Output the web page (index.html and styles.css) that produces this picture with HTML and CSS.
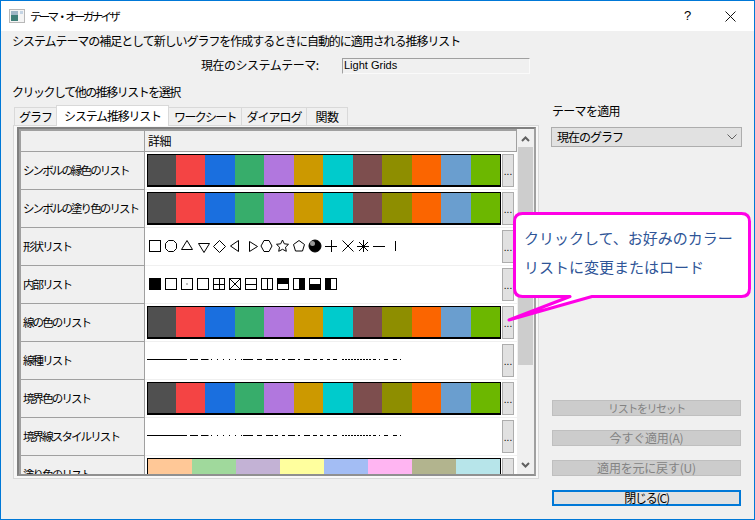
FILE: index.html
```html
<!DOCTYPE html>
<html lang="ja">
<head>
    <meta charset="UTF-8">
    <title>テーマ・オーガナイザ</title>
    <link rel="stylesheet" href="styles.css">
</head>
<body>
    <div class="window">
        <div class="title-bar">
            <svg class="app-icon" width="16" height="16" viewBox="0 0 16 16">
                <rect x="0.5" y="1.5" width="15" height="13" fill="#f4f4f4" stroke="#b8b8b8"/>
                <rect x="2" y="3" width="7" height="10" fill="#3f7f78"/>
                <rect x="2" y="3" width="7" height="4" fill="#9fb6c6"/>
                <rect x="11" y="3" width="3" height="3" fill="#c4d4e4"/>
            </svg>
            <span class="title-text">テーマ・オーガナイザ</span>
            <span class="title-help">?</span>
            <svg class="title-close" width="11" height="11" viewBox="0 0 11 11">
                <path d="M0.5 0.5L10.5 10.5M10.5 0.5L0.5 10.5" stroke="#111" fill="none"/>
            </svg>
        </div>
        <div class="body">
            <div class="left-col">
                <div class="intro">システムテーマの補足として新しいグラフを作成するときに自動的に適用される推移リスト</div>
                <div class="current-row">
                    <span class="current-label">現在のシステムテーマ:</span>
                    <div class="current-box">Light Grids</div>
                </div>
                <div class="pick-label">クリックして他の推移リストを選択</div>
                <div class="tabs">
                    <div class="tab tab-first">グラフ</div>
                    <div class="tab active">システム推移リスト</div>
                    <div class="tab tab-sheet">ワークシート</div>
                    <div class="tab tab-dialog">ダイアログ</div>
                    <div class="tab tab-func">関数</div>
                </div>
                <div class="pane">
                    <div class="grid-frame">
                        <div class="grid-scroll">
                            <div class="grid-row head">
                                <div class="label"></div>
                                <div class="head-cell">詳細</div>
                            </div>
                            <div class="grid-row">
                                <div class="label">シンボルの縁色のリスト</div>
                                <div class="cell">
                                    <div class="swatch"><i class="c1"></i><i class="c2"></i><i class="c3"></i><i class="c4"></i><i class="c5"></i><i class="c6"></i><i class="c7"></i><i class="c8"></i><i class="c9"></i><i class="c10"></i><i class="c11"></i><i class="c12"></i></div>
                                    <div class="more">...</div>
                                </div>
                            </div>
                            <div class="grid-row">
                                <div class="label">シンボルの塗り色のリスト</div>
                                <div class="cell">
                                    <div class="swatch"><i class="c1"></i><i class="c2"></i><i class="c3"></i><i class="c4"></i><i class="c5"></i><i class="c6"></i><i class="c7"></i><i class="c8"></i><i class="c9"></i><i class="c10"></i><i class="c11"></i><i class="c12"></i></div>
                                    <div class="more">...</div>
                                </div>
                            </div>
                            <div class="grid-row">
                                <div class="label">形状リスト</div>
                                <div class="cell">
                                    <svg class="sample" width="354" height="33" viewBox="0 0 354 33" fill="none" stroke="#000">
                                        <rect x="2.5" y="10.5" width="11" height="11"/>
                                        <path d="M21.5 10.5h5l3 3v5l-3 3h-5l-3-3v-5z"/>
                                        <path d="M40 10.5l5.5 9h-11z"/>
                                        <path d="M51.5 13.5h11l-5.5 9z"/>
                                        <path d="M72.5 10.5l6 6-6 6-6-6z"/>
                                        <path d="M91.5 10.5v11l-8-5.500z"/>
                                        <path d="M102.500 11.500v10l8-5z"/>
                                        <path d="M117 10.500h5l3 5.500-3 5.500h-5l-3-5.500z"/>
                                        <path d="M135.500 10l1.800 3.800 4.200.5-3 2.900.8 4.100-3.800-2-3.800 2 .8-4.100-3-2.900 4.200-.5z"/>
                                        <path d="M152 10.500l5.500 4-2 6.500h-7l-2-6.500z"/>
                                        <circle cx="168" cy="16" r="6" fill="#000"/>
                                        <circle cx="165.500" cy="13.500" r="2.500" fill="#999" stroke="none"/>
                                        <path d="M178 16.500h12M184.500 10v12M195.500 10.500l11 11M206.500 10.500l-11 11M210 16.500h12M216.500 10v12M212 12l9 9M221 12l-9 9M226 16.500h12M248.500 11v10"/>
                                    </svg>
                                    <div class="more">...</div>
                                </div>
                            </div>
                            <div class="grid-row">
                                <div class="label">内部リスト</div>
                                <div class="cell">
                                    <svg class="sample" width="354" height="33" viewBox="0 0 354 33" fill="none" stroke="#000">
                                        <rect x="2.500" y="10.500" width="11" height="11" fill="#000"/>
                                        <rect x="18.500" y="10.500" width="11" height="11"/>
                                        <rect x="34.500" y="10.500" width="11" height="11"/>
                                        <rect x="39.500" y="15.500" width="1" height="1" fill="#000" stroke="none"/>
                                        <rect x="50.500" y="10.500" width="11" height="11"/>
                                        <rect x="66.500" y="10.500" width="11" height="11"/>
                                        <path d="M66.500 16.500h11M72.500 10.500v11"/>
                                        <rect x="82.500" y="10.500" width="11" height="11"/>
                                        <path d="M82.500 10.500l11 11M93.500 10.500l-11 11"/>
                                        <rect x="98.500" y="10.500" width="11" height="11"/>
                                        <path d="M98.500 16.500h11"/>
                                        <rect x="114.500" y="10.500" width="11" height="11"/>
                                        <path d="M120.500 10.500v11"/>
                                        <rect x="130.500" y="10.500" width="11" height="11"/>
                                        <rect x="130.500" y="10.500" width="11" height="5" fill="#000"/>
                                        <rect x="146.500" y="10.500" width="11" height="11"/>
                                        <rect x="152.500" y="10.500" width="5" height="11" fill="#000"/>
                                        <rect x="162.500" y="10.500" width="11" height="11"/>
                                        <rect x="162.500" y="16.500" width="11" height="5" fill="#000"/>
                                        <rect x="178.500" y="10.500" width="11" height="11"/>
                                        <rect x="178.500" y="10.500" width="5" height="11" fill="#000"/>
                                    </svg>
                                    <div class="more">...</div>
                                </div>
                            </div>
                            <div class="grid-row">
                                <div class="label">線の色のリスト</div>
                                <div class="cell">
                                    <div class="swatch"><i class="c1"></i><i class="c2"></i><i class="c3"></i><i class="c4"></i><i class="c5"></i><i class="c6"></i><i class="c7"></i><i class="c8"></i><i class="c9"></i><i class="c10"></i><i class="c11"></i><i class="c12"></i></div>
                                    <div class="more">...</div>
                                </div>
                            </div>
                            <div class="grid-row">
                                <div class="label">線種リスト</div>
                                <div class="cell">
                                    <svg class="sample" width="354" height="33" viewBox="0 0 354 33" fill="none" stroke="#000">
                                        <path d="M0 15.500h40M43 15.500h8M54 15.500h7.500"/>
                                        <path d="M64 15.500h31" stroke-dasharray="1 5"/>
                                        <path d="M96 15.500h10M110 15.500h5M119 15.500h7M128 15.500h3M135 15.500h3M141 15.500h7M151 15.500h2M157 15.500h6M166 15.500h4M173 15.500h3M180 15.500h3M186 15.500h4"/>
                                        <path d="M195 15.500h30" stroke-dasharray="2 1"/>
                                        <path d="M226 15.500h3M232 15.500h1M237 15.500h4M246 15.500h4M253 15.500h1"/>
                                    </svg>
                                    <div class="more">...</div>
                                </div>
                            </div>
                            <div class="grid-row">
                                <div class="label">境界色のリスト</div>
                                <div class="cell">
                                    <div class="swatch"><i class="c1"></i><i class="c2"></i><i class="c3"></i><i class="c4"></i><i class="c5"></i><i class="c6"></i><i class="c7"></i><i class="c8"></i><i class="c9"></i><i class="c10"></i><i class="c11"></i><i class="c12"></i></div>
                                    <div class="more">...</div>
                                </div>
                            </div>
                            <div class="grid-row">
                                <div class="label">境界線スタイルリスト</div>
                                <div class="cell">
                                    <svg class="sample" width="354" height="33" viewBox="0 0 354 33" fill="none" stroke="#000">
                                        <path d="M0 15.500h40M43 15.500h8M54 15.500h7.500"/>
                                        <path d="M64 15.500h31" stroke-dasharray="1 5"/>
                                        <path d="M96 15.500h10M110 15.500h5M119 15.500h7M128 15.500h3M135 15.500h3M141 15.500h7M151 15.500h2M157 15.500h6M166 15.500h4M173 15.500h3M180 15.500h3M186 15.500h4"/>
                                        <path d="M195 15.500h30" stroke-dasharray="2 1"/>
                                        <path d="M226 15.500h3M232 15.500h1M237 15.500h4M246 15.500h4M253 15.500h1"/>
                                    </svg>
                                    <div class="more">...</div>
                                </div>
                            </div>
                            <div class="grid-row">
                                <div class="label">塗り色のリスト</div>
                                <div class="cell">
                                    <div class="swatch"><i class="p1"></i><i class="p2"></i><i class="p3"></i><i class="p4"></i><i class="p5"></i><i class="p6"></i><i class="p7"></i><i class="p8"></i></div>
                                    <div class="more">...</div>
                                </div>
                            </div>
                        </div>
                        <div class="scrollbar">
                            <svg class="arrow" width="15" height="16" viewBox="0 0 15 16"><path d="M4 10l3.500-3.500L11 10" stroke="#606060" stroke-width="2" fill="none"/></svg>
                            <div class="thumb"></div>
                            <svg class="arrow arrow-down" width="15" height="16" viewBox="0 0 15 16"><path d="M4 6l3.500 3.500L11 6" stroke="#606060" stroke-width="2" fill="none"/></svg>
                        </div>
                    </div>
                </div>
            </div>
            <div class="right-col">
                <div class="apply-label">テーマを適用</div>
                <div class="combo">
                    <span>現在のグラフ</span>
                    <svg width="10" height="6" viewBox="0 0 10 6"><path d="M0.500 0.500L5 5l4.500-4.500" stroke="#606060" fill="none"/></svg>
                </div>
                <div class="actions">
                    <div class="btn disabled btn-reset">リストをリセット</div>
                    <div class="btn disabled btn-apply">今すぐ適用(A)</div>
                    <div class="btn disabled btn-apply">適用を元に戻す(U)</div>
                    <div class="btn primary">閉じる(C)</div>
                </div>
            </div>
        </div>
        <svg class="callout-shape" width="248" height="120" viewBox="0 0 248 120">
            <path d="M15.500 2.500H234.500Q242.500 2.500 242.500 10.500V77.500Q242.500 85.500 234.500 85.500H85L2 109 63 85.500H15.500Q7.500 85.500 7.500 77.500V10.500Q7.500 2.500 15.500 2.500Z" fill="#fff" stroke="#ff00e6" stroke-width="3" stroke-linejoin="round"/>
        </svg>
        <div class="callout-text">クリックして、お好みのカラー<br>リストに変更またはロード</div>
    </div>
</body>
</html>
```

FILE: styles.css
```css
* {
    box-sizing: border-box;
}

body {
    margin: 0;
    background: #f0f0f0;
    color: #000;
    font-family: "Noto Sans CJK JP", "Liberation Sans", sans-serif;
    font-size: 12px;
    line-height: 16px;
}

.window {
    position: relative;
    width: 755px;
    height: 520px;
    overflow: hidden;
    background: #f0f0f0;
    border: 1px solid #0078d7;
}

/* title bar */
.title-bar {
    display: flex;
    align-items: center;
    height: 30px;
    padding-left: 8px;
    background: #fff;
}

.title-text {
    margin-left: 5px;
    font-size: 11.5px;
    letter-spacing: -2.7px;
}

.title-help {
    margin-left: auto;
    width: 11px;
    font-family: "Liberation Sans", sans-serif;
    font-size: 13px;
}

.title-close {
    margin: 0 18px 0 30px;
}

/* main layout */
.body {
    display: flex;
    height: 488px;
}

.left-col {
    width: 538px;
    padding-left: 11px;
}

.intro {
    margin-top: 2px;
    letter-spacing: -1.05px;
}

.current-row {
    display: flex;
    align-items: flex-start;
    height: 18px;
    margin-top: 8px;
}

.current-label {
    margin-left: 189px;
    width: 141px;
    letter-spacing: -0.5px;
}

.current-box {
    width: 188px;
    height: 16px;
    margin-top: 1px;
    padding-left: 1px;
    font-size: 11px;
    line-height: 12px;
    border: 1px solid #a0a0a0;
    border-right-color: #fafafa;
    border-bottom-color: #fafafa;
    font-family: "Liberation Sans", sans-serif;
}

.pick-label {
    margin-top: 9px;
    letter-spacing: -1.5px;
}

/* tabs */
.tabs {
    display: flex;
    align-items: flex-end;
    height: 20px;
    margin-top: 5px;
    padding-left: 3px;
}

.tab {
    height: 18px;
    text-align: center;
    line-height: 17px;
    letter-spacing: -1px;
    background: #f0f0f0;
    border: 1px solid #d9d9d9;
    border-bottom: none;
    margin-left: -1px;
}

.tab-first {
    width: 43px;
}

.tab.active {
    position: relative;
    z-index: 1;
    width: 113px;
    height: 21px;
    margin-bottom: -1px;
    line-height: 19px;
    letter-spacing: -1.2px;
    background: #fff;
}

.tab-sheet {
    width: 74px;
    letter-spacing: -1.7px;
}

.tab-dialog {
    width: 66px;
}

.tab-func {
    width: 42px;
    letter-spacing: -0.5px;
}

.pane {
    width: 526px;
    height: 354px;
    margin-left: 1px;
    padding: 1px 2px 0 3px;
    background: #f8f8f8;
    border: 1px solid #d9d9d9;
}

/* list grid */
.grid-frame {
    display: flex;
    height: 349px;
    border: 2px solid #808080;
    border-right-color: #a0a0a0;
    border-bottom-color: #909090;
    background: #f0f0f0;
}

.grid-scroll {
    flex: 1;
    overflow: hidden;
    border-left: 2px solid #a0a0a0;
    border-top: 2px solid #a0a0a0;
}

.grid-row {
    display: flex;
    height: 38px;
    background: #fff;
}

.grid-row.head {
    height: 21px;
    background: #f0f0f0;
}

.label {
    width: 124px;
    padding-left: 2px;
    font-size: 11.5px;
    line-height: 37px;
    white-space: nowrap;
    letter-spacing: -1.9px;
    background: #f0f0f0;
    border-right: 1px solid #a0a0a0;
    border-bottom: 1px solid #a0a0a0;
}

.head-cell {
    flex: 1;
    padding-left: 3px;
    line-height: 20px;
    border-right: 1px solid #a0a0a0;
    border-bottom: 1px solid #a0a0a0;
    letter-spacing: -0.6px;
}

.cell {
    display: flex;
    flex: 1;
    align-items: flex-start;
    padding: 2px 2px 0 2px;
    background: #fff;
    border-bottom: 1px solid #f0f0f0;
}

.swatch {
    display: flex;
    width: 354px;
    height: 33px;
    border: 1px solid #000;
    border-bottom-width: 2px;
}

.swatch i {
    flex: 1;
}

.swatch .c1 {
    flex: 0 0 28px;
}

.sample {
    display: block;
    width: 354px;
}

.c1 { background: #505050; }
.c2 { background: #f44444; }
.c3 { background: #1a6fdf; }
.c4 { background: #37ad6b; }
.c5 { background: #b177de; }
.c6 { background: #cc9900; }
.c7 { background: #00cbcc; }
.c8 { background: #7d4e4e; }
.c9 { background: #8e8e00; }
.c10 { background: #fb6500; }
.c11 { background: #6a9ecf; }
.c12 { background: #6cb700; }

.p1 { background: #ffc897; }
.p2 { background: #a0d99c; }
.p3 { background: #c3b2d5; }
.p4 { background: #ffff9e; }
.p5 { background: #a3bdf4; }
.p6 { background: #ffb5f2; }
.p7 { background: #b2b48e; }
.p8 { background: #b7e5ea; }

.more {
    width: 12px;
    height: 33px;
    margin-left: 1px;
    padding-top: 10px;
    text-align: center;
    font-size: 10px;
    line-height: 14px;
    font-family: "Liberation Sans", sans-serif;
    background: #e1e1e1;
    border: 1px solid #adadad;
}

.scrollbar {
    position: relative;
    flex: none;
    width: 17px;
    padding-left: 1px;
    background: #f0f0f0;
}

.arrow {
    display: block;
}

.arrow-down {
    position: absolute;
    left: 1px;
    bottom: 1px;
}

.thumb {
    width: 15px;
    height: 218px;
    background: #cdcdcd;
}

.scrollbar .arrow:first-child {
    margin-top: 2px;
}

/* right column */
.right-col {
    display: flex;
    flex-direction: column;
    width: 191px;
    margin-left: 12px;
}

.apply-label {
    margin-top: 72px;
    padding-left: 1px;
    letter-spacing: -0.7px;
}

.combo {
    display: flex;
    align-items: center;
    justify-content: space-between;
    width: 191px;
    height: 20px;
    margin-top: 8px;
    padding: 0 4px 0 5px;
    letter-spacing: -1px;
    background: #e1e1e1;
    border: 1px solid #adadad;
}

.actions {
    display: flex;
    flex-direction: column;
    gap: 14px;
    margin-top: 253px;
    margin-left: 1px;
}

.btn {
    width: 189px;
    height: 16px;
    text-align: center;
    line-height: 14px;
    letter-spacing: -1.2px;
    border: 1px solid #bfbfbf;
    background: #e1e1e1;
}

.btn.disabled {
    color: #838383;
    background: #cccccc;
}

.btn-reset {
    font-size: 11px;
    letter-spacing: -1.4px;
}

.btn-apply {
    letter-spacing: -0.2px;
}

.btn.primary {
    border: 2px solid #0078d7;
    line-height: 12px;
}

/* annotation */
.callout-shape {
    position: absolute;
    left: 506px;
    top: 210px;
}

.callout-text {
    position: absolute;
    left: 523px;
    top: 222px;
    color: #2f5597;
    font-size: 15px;
    line-height: 29px;
    white-space: nowrap;
}
```
